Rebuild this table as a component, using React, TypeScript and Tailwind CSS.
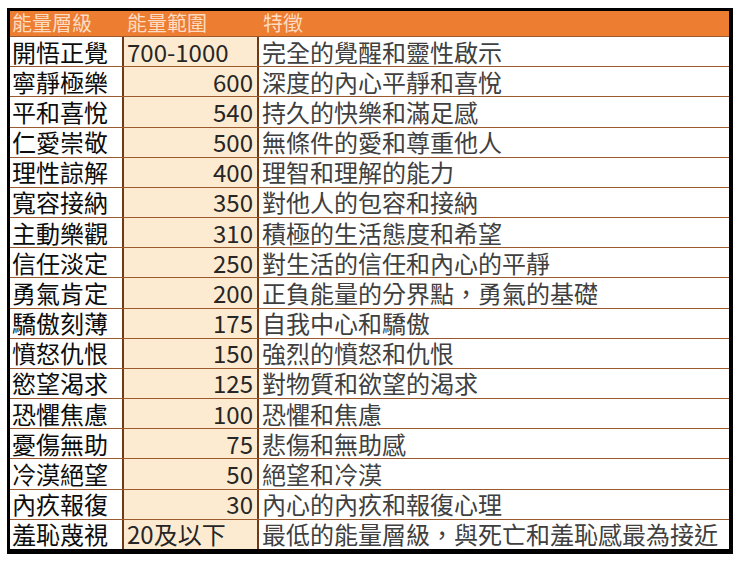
import React from "react";

const rows: [string, string, string, boolean][] = [
  ["開悟正覺", "700-1000", "完全的覺醒和靈性啟示", false],
  ["寧靜極樂", "600", "深度的內心平靜和喜悅", true],
  ["平和喜悅", "540", "持久的快樂和滿足感", true],
  ["仁愛崇敬", "500", "無條件的愛和尊重他人", true],
  ["理性諒解", "400", "理智和理解的能力", true],
  ["寬容接納", "350", "對他人的包容和接納", true],
  ["主動樂觀", "310", "積極的生活態度和希望", true],
  ["信任淡定", "250", "對生活的信任和內心的平靜", true],
  ["勇氣肯定", "200", "正負能量的分界點，勇氣的基礎", true],
  ["驕傲刻薄", "175", "自我中心和驕傲", true],
  ["憤怒仇恨", "150", "強烈的憤怒和仇恨", true],
  ["慾望渴求", "125", "對物質和欲望的渴求", true],
  ["恐懼焦慮", "100", "恐懼和焦慮", true],
  ["憂傷無助", "75", "悲傷和無助感", true],
  ["冷漠絕望", "50", "絕望和冷漠", true],
  ["內疚報復", "30", "內心的內疚和報復心理", true],
  ["羞恥蔑視", "20及以下", "最低的能量層級，與死亡和羞恥感最為接近", false],
];

const font = { fontFamily: '"Noto Sans CJK TC", "Noto Sans", sans-serif' };

export default function App() {
  return (
    <div className="w-[740px] h-[563px] bg-white pt-[8px] pl-[7px]" style={font}>
      <div className="w-[726px] h-[546px] border-t-[3px] border-l-[3px] border-r-[4px] border-b-[5px] border-black flex flex-col bg-white">
        <div className="h-[25px] shrink-0 bg-[#ed7d31] grid grid-cols-[114px_135px_1fr] text-[20px] leading-[24px] text-[#fcdcc2]">
          <div className="pl-[2px]">能量層級</div>
          <div className="pl-[3px]">能量範圍</div>
          <div className="pl-[4px]">特徵</div>
        </div>
        {rows.map(([a, b, c, right]) => (
          <div
            key={a}
            className="flex-1 grid grid-cols-[114px_135px_1fr] border-t border-[#9a5a2e] text-[24px] leading-[26px]"
          >
            <div className="flex items-center pl-[2px] text-[#0d0d0d] border-r-2 border-[#6e3a18]">{a}</div>
            <div
              className={`flex items-center bg-[#fdebd1] text-[#262626] border-r-2 border-[#6e3a18] ${right ? "justify-end pr-[4px]" : "justify-start pl-[3px]"}`}
            >
              {b}
            </div>
            <div className="flex items-center pl-[3px] text-[#404040] whitespace-nowrap">{c}</div>
          </div>
        ))}
      </div>
    </div>
  );
}
